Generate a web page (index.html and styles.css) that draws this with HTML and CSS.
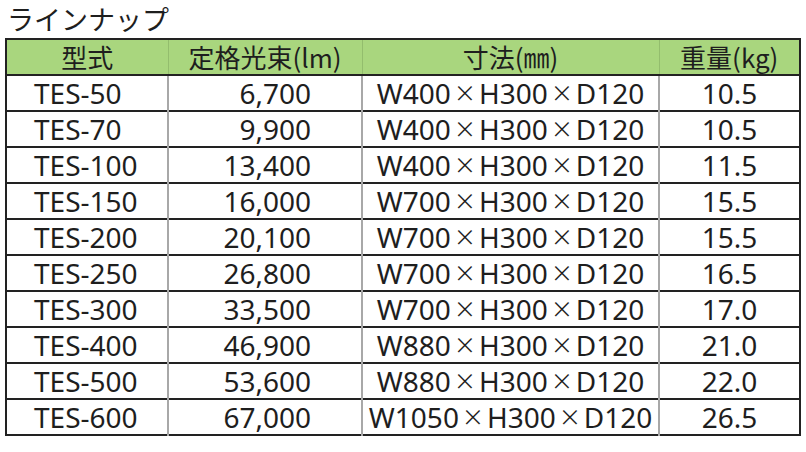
FILE: index.html
```html
<!DOCTYPE html>
<html lang="ja">
<head>
<meta charset="utf-8">
<link rel="stylesheet" href="styles.css">
</head>
<body>
<div class="page">
  <h1 class="title">ラインナップ</h1>
  <table class="lineup">
    <colgroup>
      <col class="c1"><col class="c2"><col class="c3"><col class="c4">
    </colgroup>
    <thead>
      <tr><th>型式</th><th>定格光束(lm)</th><th>寸法(㎜)</th><th>重量(kg)</th></tr>
    </thead>
    <tbody>
      <tr><td class="model">TES-50</td><td class="num">6,700</td><td class="dim">W400<span class="x">×</span>H300<span class="x">×</span>D120</td><td class="wt">10.5</td></tr>
      <tr><td class="model">TES-70</td><td class="num">9,900</td><td class="dim">W400<span class="x">×</span>H300<span class="x">×</span>D120</td><td class="wt">10.5</td></tr>
      <tr><td class="model">TES-100</td><td class="num">13,400</td><td class="dim">W400<span class="x">×</span>H300<span class="x">×</span>D120</td><td class="wt">11.5</td></tr>
      <tr><td class="model">TES-150</td><td class="num">16,000</td><td class="dim">W700<span class="x">×</span>H300<span class="x">×</span>D120</td><td class="wt">15.5</td></tr>
      <tr><td class="model">TES-200</td><td class="num">20,100</td><td class="dim">W700<span class="x">×</span>H300<span class="x">×</span>D120</td><td class="wt">15.5</td></tr>
      <tr><td class="model">TES-250</td><td class="num">26,800</td><td class="dim">W700<span class="x">×</span>H300<span class="x">×</span>D120</td><td class="wt">16.5</td></tr>
      <tr><td class="model">TES-300</td><td class="num">33,500</td><td class="dim">W700<span class="x">×</span>H300<span class="x">×</span>D120</td><td class="wt">17.0</td></tr>
      <tr><td class="model">TES-400</td><td class="num">46,900</td><td class="dim">W880<span class="x">×</span>H300<span class="x">×</span>D120</td><td class="wt">21.0</td></tr>
      <tr><td class="model">TES-500</td><td class="num">53,600</td><td class="dim">W880<span class="x">×</span>H300<span class="x">×</span>D120</td><td class="wt">22.0</td></tr>
      <tr><td class="model">TES-600</td><td class="num">67,000</td><td class="dim">W1050<span class="x">×</span>H300<span class="x">×</span>D120</td><td class="wt">26.5</td></tr>
    </tbody>
  </table>
</div>
</body>
</html>
```
FILE: styles.css
```css
html, body {
  margin: 0;
  padding: 0;
  background: #ffffff;
}
.page {
  padding: 0 0 0 5px;
  font-family: "Noto Sans", "Noto Sans CJK JP", sans-serif;
  color: #1e1e1e;
}
.title {
  margin: 0;
  padding: 1px 0 1px 2px;
  font-family: "Noto Sans CJK JP", sans-serif;
  font-weight: 400;
  font-size: 27px;
  line-height: 36px;
  color: #1e1e1e;
}
.lineup {
  border-collapse: collapse;
  table-layout: fixed;
  width: 794px;
  border: 2px solid #222;
}
.c1 { width: 162px; }
.c2 { width: 194px; }
.c3 { width: 297px; }
.c4 { width: 141px; }
.lineup th {
  background: #a9d67e;
  font-family: "Noto Sans CJK JP", sans-serif;
  font-weight: 400;
  font-size: 26px;
  height: 34px;
  padding: 0;
  line-height: 34px;
  text-align: center;
  border-bottom: 2px solid #222;
  border-left: 1px solid #93bd6d;
}
.lineup td {
  height: 34px;
  padding: 0;
  font-size: 28px;
  line-height: 34px;
  white-space: nowrap;
  border-top: 2px solid #222;
  border-left: 2px solid #a8a8a8;
}
.lineup th:first-child, .lineup td:first-child { border-left: none; }
.model { text-align: left; padding-left: 27px !important; }
.num { text-align: right; padding-right: 50px !important; }
.dim { text-align: center; }
.wt { text-align: center; }
.x {
  display: inline-block;
  width: 28px;
  font-family: "Open Sans", sans-serif;
  font-weight: 300;
  font-size: 28px;
  line-height: 28px;
  text-align: center;
  transform: scale(1.18) translateY(-1px);
}
```
